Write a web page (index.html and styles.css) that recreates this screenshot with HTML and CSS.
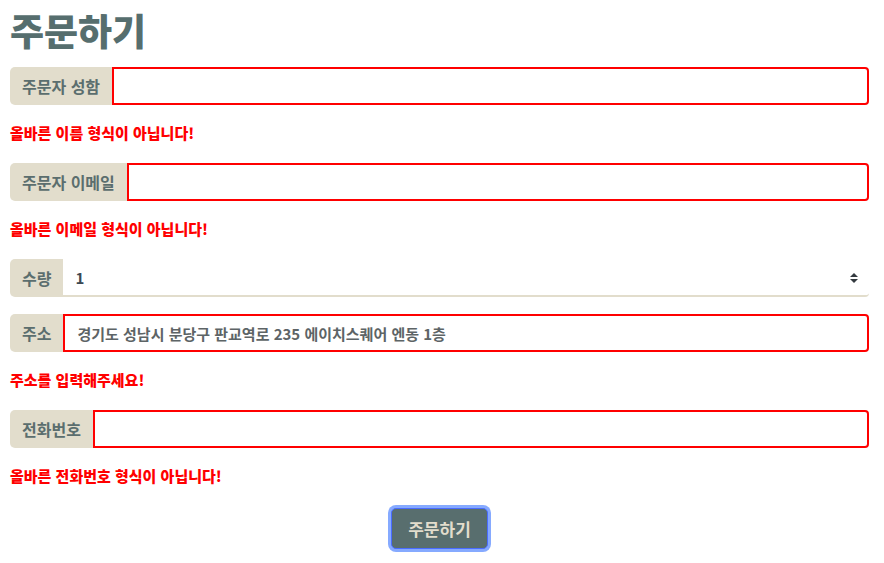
FILE: index.html
```html
<!DOCTYPE html>
<html lang="ko">
<head>
    <meta charset="UTF-8">
    <meta name="viewport" content="width=device-width, initial-scale=1.0">
    <title>주문하기</title>
    <link rel="stylesheet" href="styles.css">
</head>
<body>

    <div class="order">
        <h1>주문하기</h1>

        <form class="order-form">
            <div class="input-group">
                <span class="input-label">주문자 성함</span>
                <input type="text" class="field invalid">
            </div>
            <p class="error">올바른 이름 형식이 아닙니다!</p>

            <div class="input-group">
                <span class="input-label">주문자 이메일</span>
                <input type="text" class="field invalid">
            </div>
            <p class="error">올바른 이메일 형식이 아닙니다!</p>

            <div class="input-group spaced">
                <span class="input-label">수량</span>
                <div class="select-wrap">
                    <select class="field select">
                        <option>1</option>
                        <option>2</option>
                        <option>3</option>
                    </select>
                    <svg class="select-arrow" width="10" height="12" viewBox="0 0 10 12">
                        <path d="M1 5 L5 1 L9 5 Z M1 7 L5 11 L9 7 Z" fill="#343a40"/>
                    </svg>
                </div>
            </div>

            <div class="input-group">
                <span class="input-label">주소</span>
                <input type="text" class="field invalid" value="경기도 성남시 분당구 판교역로 235 에이치스퀘어 엔동 1층">
            </div>
            <p class="error">주소를 입력해주세요!</p>

            <div class="input-group">
                <span class="input-label">전화번호</span>
                <input type="text" class="field invalid">
            </div>
            <p class="error">올바른 전화번호 형식이 아닙니다!</p>

            <div class="actions">
                <button type="submit" class="submit-button">주문하기</button>
            </div>
        </form>
    </div>

</body>
</html>
```

FILE: styles.css
```css
body {
    margin: 0;
    font-family: "Noto Sans CJK KR", "Noto Sans", sans-serif;
    background-color: #ffffff;
}
.order {
    padding: 10px 15px 10px 10px;
}
h1 {
    margin: 0 0 16px;
    font-size: 37px;
    line-height: 41px;
    font-weight: 900;
    color: #566e6e;
}
.input-group {
    display: flex;
    height: 38px;
}
.input-group.spaced {
    margin-bottom: 17px;
}
.input-label {
    display: flex;
    align-items: center;
    padding: 0 12px;
    background-color: #e2ddcc;
    color: #5b6e6e;
    font-size: 16px;
    font-weight: 700;
    border-radius: 5px 0 0 5px;
    white-space: nowrap;
}
.field {
    flex: 1;
    min-width: 0;
    box-sizing: border-box;
    height: 38px;
    margin: 0;
    padding: 0 12px;
    font-family: inherit;
    font-size: 15px;
    font-weight: 700;
    color: #5d6466;
    background: #ffffff;
    border: 2px solid #ff0000;
    border-radius: 0 4px 4px 0;
    outline: none;
}
.select-wrap {
    flex: 1;
    display: flex;
    position: relative;
}
.select {
    appearance: none;
    border: none;
    border-bottom: 2px solid #e2ddcc;
    border-radius: 0 0 4px 0;
    color: #3b4852;
    font-size: 15px;
}
.select-arrow {
    position: absolute;
    right: 10px;
    top: 13px;
}
.error {
    margin: 16px 0 18px;
    line-height: 24px;
    font-size: 15px;
    font-weight: 900;
    color: #ff0000;
}
.actions {
    display: flex;
    justify-content: center;
    padding-top: 2px;
}
.submit-button {
    height: 41px;
    padding: 0 16px;
    font-family: inherit;
    font-size: 17px;
    font-weight: 700;
    color: #e2ddcc;
    background-color: #586e6e;
    border: 1px solid #4a6cff;
    border-radius: 5px;
    box-shadow: 0 0 0 3px #86aaff;
    cursor: pointer;
}
```
